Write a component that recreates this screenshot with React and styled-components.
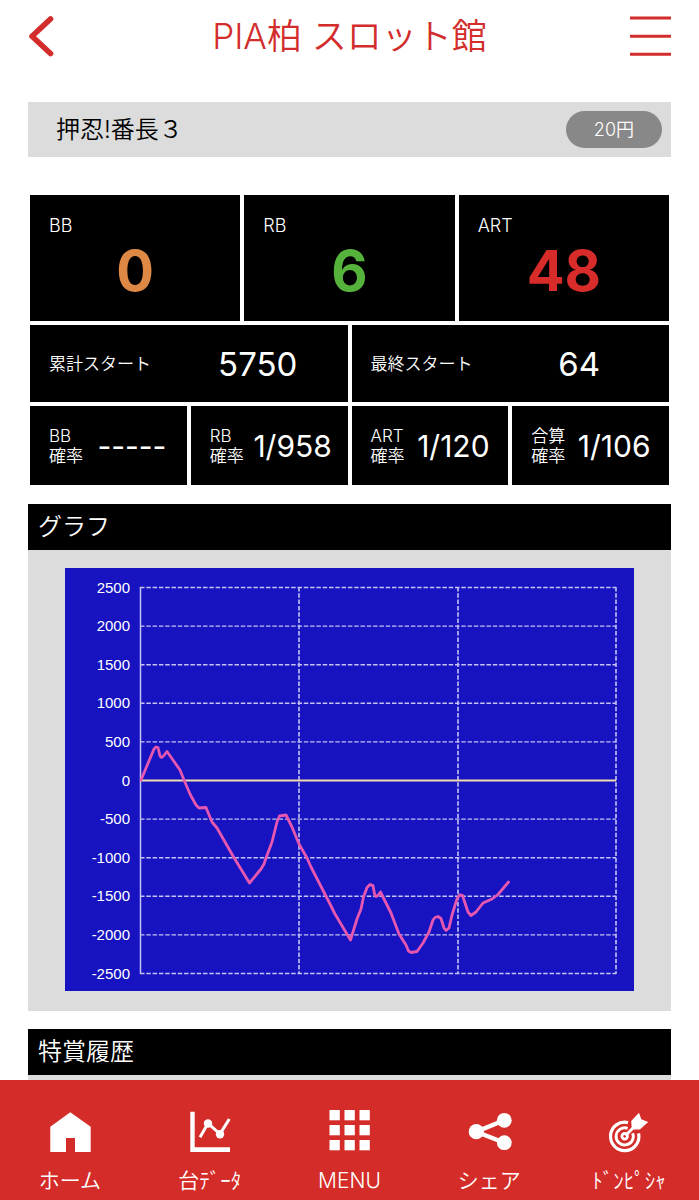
import styled, { createGlobalStyle } from "styled-components"

const counters = [
    { label: "BB", value: "0", color: "#dd8844" },
    { label: "RB", value: "6", color: "#55b33b" },
    { label: "ART", value: "48", color: "#d72c2a" },
]

const starts = [
    { label: "累計スタート", value: "5750" },
    { label: "最終スタート", value: "64" },
]

const rates = [
    { label: "BB", value: "-----" },
    { label: "RB", value: "1/958" },
    { label: "ART", value: "1/120" },
    { label: "合算", value: "1/106" },
]

const ticks = [2500, 2000, 1500, 1000, 500, 0, -500, -1000, -1500, -2000, -2500]
const columns = [234, 393, 551]

const payout = [
    [76, 212], [89, 181], [91, 179], [93, 179.5], [95, 188], [96.5, 189.5], [98.5, 188], [102, 183.5],
    [115, 202], [119, 212], [125, 226], [131, 237], [134, 240], [141, 239.5], [147, 254], [152, 260],
    [168, 288], [184.5, 315], [196, 301], [199, 296], [201, 290], [207, 274], [212, 254], [214.5, 248],
    [221, 247], [227, 259], [234, 276], [242, 290], [246, 299], [265, 336], [270, 346], [285.5, 372],
    [292, 351], [296, 341], [298.5, 329], [302, 319.5], [305, 316.5], [308, 317.5], [309.5, 326],
    [311, 328.5], [313, 327.5], [315.5, 324], [326, 345], [334, 366], [341, 377], [343.5, 383],
    [346, 384.5], [352, 383.5], [358, 375], [364, 364], [368, 352], [370, 349.5], [373, 348.5],
    [376, 350.5], [379, 360], [381, 362.5], [384, 360], [387, 347], [392, 331], [394.5, 327],
    [397.5, 327.5], [403, 344], [406, 347.5], [411, 344], [418, 335], [427, 331], [433, 326.5], [443.5, 314],
]

const lineY = (i) => 19.5 + i * 38.6

const Graph = () => (
    <svg viewBox="0 0 569 423" role="img" aria-label="グラフ">
        <rect width="569" height="423" fill="#1713c0" />
        <g fill="#fff" fontFamily='"Liberation Sans", Arial, sans-serif' fontSize="15" textAnchor="end">
            {ticks.map((t, i) => <text key={t} x="65" y={lineY(i) + 5}>{t}</text>)}
        </g>
        <g stroke="#c4c3f2" strokeWidth="1.4" strokeDasharray="4.5 1.8">
            {ticks.map((t, i) => t !== 0 && <line key={t} x1="75" x2="551" y1={lineY(i)} y2={lineY(i)} />)}
            {columns.map(x => <line key={x} x1={x} x2={x} y1="19" y2="406" strokeWidth="1.6" />)}
        </g>
        <line x1="75.5" x2="75.5" y1="19" y2="406" stroke="#c4c3f2" strokeWidth="1.5" />
        <line x1="75" x2="551" y1="212.5" y2="212.5" stroke="#f0dcae" strokeWidth="2" />
        <polyline
            points={payout.map(p => p.join(",")).join(" ")}
            fill="none"
            stroke="#e658b0"
            strokeWidth="2.8"
            strokeLinejoin="round"
            strokeLinecap="round"
        />
    </svg>
)

const HomeIcon = () => (
    <svg viewBox="0 0 48 48" fill="#fff">
        <path d="M4.3 19.7 24.3 5.3 44.7 19.7V45H29V31H20V45H4.3Z" />
    </svg>
)

const DataIcon = () => (
    <svg viewBox="0 0 48 48" fill="#fff">
        <path d="M4.3 4.7H8.7V40.3H44V45H4.3Z" />
        <path d="M14 30.3 22 16.3 34 27 43.3 12" fill="none" stroke="#fff" strokeWidth="3" />
        <circle cx="22" cy="16.5" r="4.2" />
        <circle cx="34" cy="27.3" r="4.2" />
    </svg>
)

const MenuIcon = () => (
    <svg viewBox="0 0 48 48" fill="#fff">
        {[3, 18, 33].map(y => [4.5, 19.5, 34.5].map(x => (
            <rect key={`${x}-${y}`} x={x} y={y} width="10.3" height="10.3" />
        )))}
    </svg>
)

const ShareIcon = () => (
    <svg viewBox="0 0 48 48" fill="#fff">
        <path d="M39.3 13.3 11.3 24.7 39.3 35.7" fill="none" stroke="#fff" strokeWidth="4.4" />
        <circle cx="11.3" cy="24.7" r="7.6" />
        <circle cx="39.3" cy="13.3" r="7.4" />
        <circle cx="39.3" cy="35.7" r="7.4" />
    </svg>
)

const TargetIcon = () => (
    <svg viewBox="0 0 48 48" fill="none" stroke="#fff">
        <path d="M23 15.6A14.2 14.2 0 1 0 33.6 26.4" strokeWidth="3.2" />
        <path d="M22.6 21.3A8.6 8.6 0 1 0 27.7 26.2" strokeWidth="2.9" />
        <circle cx="19.7" cy="29.3" r="2.8" strokeWidth="2.8" />
        <path d="M20.5 28.5 31 18" strokeWidth="3" />
        <path d="M26.2 14 34 5.7 36.3 12.3 43.2 15 34.9 22.6H26.8Z" fill="#fff" stroke="none" />
    </svg>
)

const links = [
    { text: "ホーム", Icon: HomeIcon },
    { text: "台ﾃﾞｰﾀ", Icon: DataIcon },
    { text: "MENU", Icon: MenuIcon },
    { text: "シェア", Icon: ShareIcon },
    { text: "ﾄﾞﾝﾋﾟｼｬ", Icon: TargetIcon },
]

const App = () => {
    return (
        <Page>
            <GlobalStyle />
            <Header>
                <IconButton type="button" aria-label="戻る">
                    <svg width="26" height="42" viewBox="0 0 26 42" fill="none" stroke="#d22d2c" strokeWidth="5.6" strokeLinecap="round" strokeLinejoin="round">
                        <path d="M22.5 4 4 21.3 22.5 38.5" />
                    </svg>
                </IconButton>
                <h1>PIA柏 スロット館</h1>
                <IconButton type="button" aria-label="メニュー" $end>
                    <svg width="41" height="40" viewBox="0 0 41 40" stroke="#d22d2c" strokeWidth="3">
                        <path d="M0 2H41M0 20.2H41M0 38.3H41" />
                    </svg>
                </IconButton>
            </Header>
            <Main>
                <MachineBar>
                    <h2>押忍!番長３</h2>
                    <Pill>20円</Pill>
                </MachineBar>
                <Stats>
                    {counters.map(c => (
                        <Counter key={c.label} $color={c.color}>
                            <dt>{c.label}</dt>
                            <dd>{c.value}</dd>
                        </Counter>
                    ))}
                    {starts.map(s => (
                        <StartCell key={s.label}>
                            <dt>{s.label}</dt>
                            <dd>{s.value}</dd>
                        </StartCell>
                    ))}
                    {rates.map(r => (
                        <RateCell key={r.label}>
                            <dt>{r.label}<br />確率</dt>
                            <dd>{r.value}</dd>
                        </RateCell>
                    ))}
                </Stats>
                <SectionTitle>グラフ</SectionTitle>
                <GraphBox>
                    <Graph />
                </GraphBox>
                <SectionTitle>特賞履歴</SectionTitle>
                <History />
            </Main>
            <Nav>
                {links.map(({ text, Icon }) => (
                    <a key={text} href="#">
                        <Icon />
                        {text}
                    </a>
                ))}
            </Nav>
        </Page>
    )
}

const GlobalStyle = createGlobalStyle`
    * {
        box-sizing: border-box;
    }

    body {
        margin: 0;
        background: #fff;
        font-family: Inter, "Noto Sans CJK JP", sans-serif;
        font-weight: 350;
    }

    h1, h2, dl, dd {
        margin: 0;
    }
`

const Page = styled.div`
    display: flex;
    flex-direction: column;
    height: 100vh;
`

const Header = styled.header`
    display: grid;
    grid-template-columns: 60px 1fr 60px;
    align-items: center;
    height: 72px;
    margin-bottom: 30px;
    padding: 0 28px;
    flex-shrink: 0;

    h1 {
        color: #d22d2c;
        font-size: 35px;
        font-weight: 350;
        line-height: 48px;
        text-align: center;
        white-space: nowrap;
    }
`

const IconButton = styled.button`
    display: flex;
    justify-content: ${props => props.$end ? "flex-end" : "flex-start"};
    padding: 0;
    border: 0;
    background: none;
`

const Main = styled.main`
    display: flex;
    flex-direction: column;
    flex: 1;
    min-height: 0;
    padding: 0 28px;
    overflow: hidden;

    > * {
        flex-shrink: 0;
    }
`

const MachineBar = styled.div`
    display: flex;
    justify-content: space-between;
    align-items: center;
    height: 55px;
    padding: 0 9px 0 28px;
    background: #dcdcdc;

    h2 {
        font-size: 24px;
        font-weight: 350;
        line-height: 36px;
    }
`

const Pill = styled.span`
    padding: 0 28px;
    border-radius: 19px;
    background: #888;
    color: #fff;
    font-size: 18px;
    line-height: 37px;
`

const Stats = styled.dl`
    display: grid;
    grid-template-columns: repeat(12, 1fr);
    gap: 4px;
    padding: 38px 2px 1px;
    color: #fff;
`

const Cell = styled.div`
    display: flex;
    background: #000;

    dt {
        font-size: 17px;
        line-height: 20px;
        white-space: nowrap;
    }

    dd {
        font-weight: 400;
        text-align: center;
    }
`

const Counter = styled(Cell)`
    grid-column: span 4;
    flex-direction: column;
    padding: 21px 0 15px;

    dt {
        padding-left: 19px;
        font-size: 18px;
    }

    dd {
        color: ${props => props.$color};
        font-size: 56px;
        font-weight: 700;
        line-height: 70px;
    }
`

const StartCell = styled(Cell)`
    grid-column: span 6;
    align-items: center;
    height: 77px;
    padding-left: 19px;

    dt {
        width: 119px;
    }

    dd {
        flex: 1;
        font-size: 33px;
    }
`

const RateCell = styled(Cell)`
    grid-column: span 3;
    align-items: center;
    height: 79px;
    padding: 0 8px 0 19px;

    dt {
        width: 36px;
    }

    dd {
        flex: 1;
        font-size: 30px;
        white-space: nowrap;
    }
`

const SectionTitle = styled.h2`
    margin-top: 18px;
    padding: 0 10px;
    background: #000;
    color: #fff;
    font-size: 24px;
    font-weight: 350;
    line-height: 46px;
`

const GraphBox = styled.div`
    padding: 18px 37px 20px;
    background: #dcdcdc;

    svg {
        display: block;
        width: 100%;
    }
`

const History = styled.div`
    flex: 1;
    background: #dcdcdc;
`

const Nav = styled.nav`
    display: grid;
    grid-template-columns: repeat(5, 1fr);
    flex-shrink: 0;
    height: 120px;
    padding-top: 27px;
    background: #d42c28;

    a {
        display: flex;
        flex-direction: column;
        align-items: center;
        color: #fff;
        font-size: 21px;
        line-height: 30px;
        text-decoration: none;
        white-space: nowrap;
    }

    svg {
        width: 48px;
        height: 48px;
        margin-bottom: 11px;
    }
`

export default App
